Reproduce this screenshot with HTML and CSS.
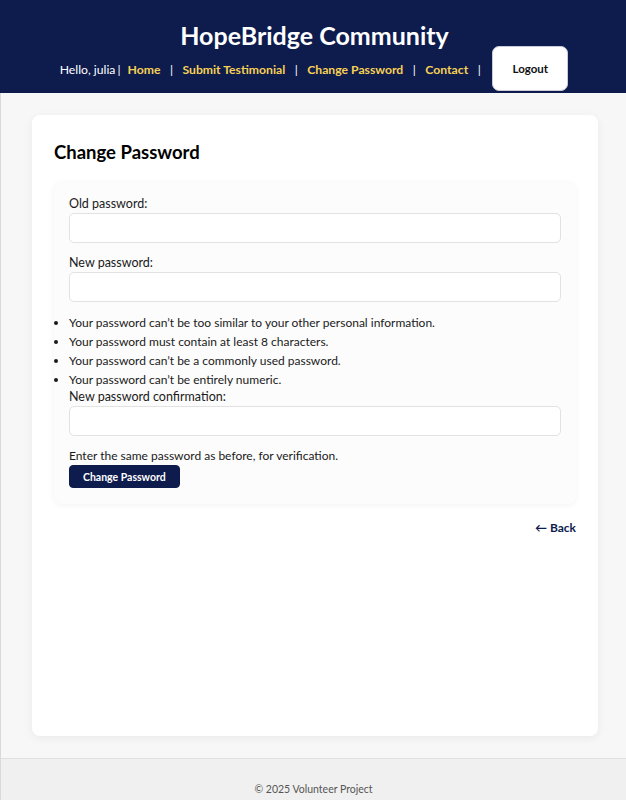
FILE: index.html
```html
<!DOCTYPE html>
<html lang="en">
<head>
<meta charset="utf-8">
<title>Change Password</title>
<link rel="stylesheet" href="styles.css">
</head>
<body>
<header class="site-header">
  <h1 class="site-title">HopeBridge Community</h1>
  <nav class="nav">
    <span class="greet">Hello, julia</span><span class="sep sep-tight">|</span>
    <a class="nav-link" href="#">Home</a><span class="sep">|</span>
    <a class="nav-link" href="#">Submit Testimonial</a><span class="sep">|</span>
    <a class="nav-link" href="#">Change Password</a><span class="sep">|</span>
    <a class="nav-link" href="#">Contact</a><span class="sep">|</span>
    <button class="logout" type="button">Logout</button>
  </nav>
</header>
<div class="page">
  <main class="main">
    <section class="card">
      <h2 class="card-title">Change Password</h2>
      <form class="pw-form">
        <p class="field"><label class="label">Old password:</label><input class="input" type="password"></p>
        <p class="field"><label class="label">New password:</label><input class="input" type="password"></p>
        <ul class="rules">
          <li>Your password can’t be too similar to your other personal information.</li>
          <li>Your password must contain at least 8 characters.</li>
          <li>Your password can’t be a commonly used password.</li>
          <li>Your password can’t be entirely numeric.</li>
        </ul>
        <p class="field"><label class="label">New password confirmation:</label><input class="input" type="password"></p>
        <p class="help">Enter the same password as before, for verification.</p>
        <button class="submit" type="button">Change Password</button>
      </form>
      <div class="back-row"><a class="back" href="#">← Back</a></div>
    </section>
  </main>
  <footer class="footer">© 2025 Volunteer Project</footer>
</div>
</body>
</html>
```
FILE: styles.css
```css
* { box-sizing: border-box; }
html, body { margin: 0; padding: 0; }
body {
  font-family: Lato, "Noto Sans", sans-serif;
  font-size: 12px;
  color: #1a1a1a;
  background: #f7f7f7;
}
.site-header {
  background: #0e1b4d;
  text-align: center;
  padding-top: 19px;
  height: 93px;
}
.site-title {
  margin: 0;
  padding-left: 3px;
  color: #fff;
  font-size: 25px;
  font-weight: 700;
  line-height: 32px;
}
.nav {
  display: flex;
  justify-content: center;
  align-items: center;
  margin-top: -5px;
  padding-left: 2px;
  font-size: 12.2px;
}
.greet, .sep, .nav-link { padding-top: 1px; }
.greet { color: #fff; }
.sep { color: #fff; margin: 0 9.5px; }
.sep-tight { margin-left: 2px; margin-right: 7px; }
.nav-link {
  color: #f7d154;
  font-weight: 700;
  text-decoration: none;
}
.logout {
  margin-left: 2px;
  width: 76px;
  height: 45px;
  background: #fff;
  border: 1px solid #c9ccd6;
  border-radius: 7px;
  font-family: inherit;
  font-size: 11.5px;
  font-weight: 700;
  color: #111;
}
.page {
  border-left: 1px solid #d9d9d9;
}
.main {
  padding: 22px 28px 22px 31px;
}
.card {
  background: #fff;
  border-radius: 8px;
  box-shadow: 0 2px 10px rgba(0,0,0,0.06);
  padding: 22px 22px;
  min-height: 621px;
}
.card-title {
  margin: 3px 0 18px;
  font-size: 18.5px;
  line-height: 24px;
  font-weight: 700;
  color: #000;
}
.pw-form {
  background: #fcfcfc;
  border-radius: 8px;
  box-shadow: 0 1px 6px rgba(0,0,0,0.05);
  padding: 13px 15px 16px;
}
.field { margin: 0 0 11px; }
.label { display: block; line-height: 18px; font-size: 12.5px; }
.input {
  display: block;
  width: 100%;
  height: 30px;
  border: 1px solid #e2e2e2;
  border-radius: 5px;
  background: #fff;
}
.rules {
  margin: 0 0 -1px;
  padding: 0;
  line-height: 19px;
  font-size: 12px;
}
.rules li { margin: 0; }
.help { margin: 10px 0 0; line-height: 18px; font-size: 12px; }
.submit {
  display: block;
  background: #0e1b4d;
  color: #fff;
  border: 1px solid #0e1b4d;
  border-radius: 4px;
  height: 23px;
  padding: 0 13px;
  font-family: inherit;
  font-size: 10.5px;
  font-weight: 700;
}
.back-row { display: flex; justify-content: flex-end; margin-top: 16px; }
.back {
  color: #0e1b4d;
  font-weight: 700;
  text-decoration: none;
  font-size: 12px;
}
.footer {
  background: #f0f0f0;
  border-top: 1px solid #e0e0e0;
  text-align: center;
  padding: 24px 0 10px;
  font-size: 10.5px;
  color: #555;
}
```
